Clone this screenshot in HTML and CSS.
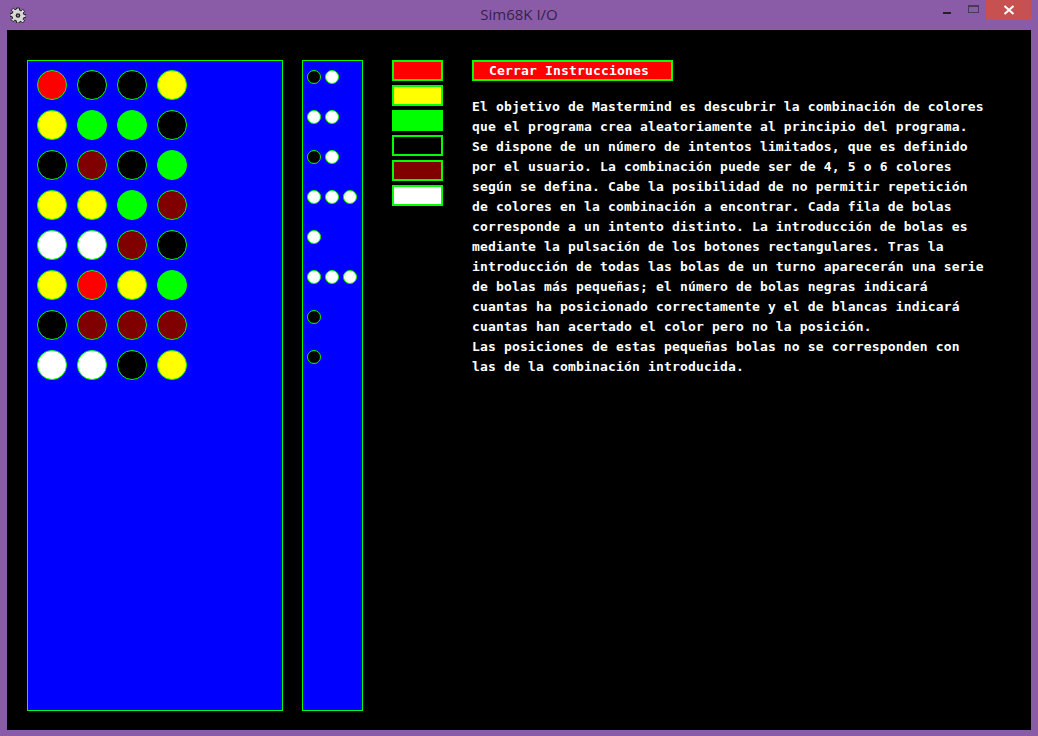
FILE: index.html
```html
<!DOCTYPE html>
<html>
<head>
<meta charset="utf-8">
<link rel="stylesheet" href="styles.css">
</head>
<body>
<div class="window">
  <div class="titlebar">
    <svg class="appicon" width="16" height="16" viewBox="0 0 16 16">
      <path d="M6.5 1h3v2.2l1.6.7 1.6-1.6 2.1 2.1-1.6 1.6.7 1.6H16v3h-2.2l-.7 1.6 1.6 1.6-2.1 2.1-1.6-1.6-1.6.7V16h-3v-2.2l-1.6-.7-1.6 1.6-2.1-2.1 1.6-1.6-.7-1.6H0v-3h2.2l.7-1.6-1.6-1.6 2.1-2.1 1.6 1.6 1.6-.7z" fill="#d8d8d8" stroke="#222" stroke-width="1"/>
      <circle cx="8" cy="8.5" r="2.3" fill="#222"/>
      <circle cx="8" cy="8.5" r="1" fill="#999"/>
    </svg>
    <div class="title">Sim68K I/O</div>
    <div class="controls">
      <div class="ctl min"><span class="dash"></span></div>
      <div class="ctl max"><span class="box"></span></div>
      <div class="ctl close">
        <svg width="12" height="10" viewBox="0 0 12 10"><path d="M1.5 1l9 8M10.5 1l-9 8" stroke="#fff" stroke-width="2"/></svg>
      </div>
    </div>
  </div>
  <div class="canvas">
    <div class="board">
      <div class="ball red"></div><div class="ball black"></div><div class="ball black"></div><div class="ball yellow"></div>
      <div class="ball yellow"></div><div class="ball green"></div><div class="ball green"></div><div class="ball black"></div>
      <div class="ball black"></div><div class="ball maroon"></div><div class="ball black"></div><div class="ball green"></div>
      <div class="ball yellow"></div><div class="ball yellow"></div><div class="ball green"></div><div class="ball maroon"></div>
      <div class="ball white"></div><div class="ball white"></div><div class="ball maroon"></div><div class="ball black"></div>
      <div class="ball yellow"></div><div class="ball red"></div><div class="ball yellow"></div><div class="ball green"></div>
      <div class="ball black"></div><div class="ball maroon"></div><div class="ball maroon"></div><div class="ball maroon"></div>
      <div class="ball white"></div><div class="ball white"></div><div class="ball black"></div><div class="ball yellow"></div>
    </div>
    <div class="pegs">
      <div class="pegrow"><div class="peg black"></div><div class="peg white"></div></div>
      <div class="pegrow"><div class="peg white"></div><div class="peg white"></div></div>
      <div class="pegrow"><div class="peg black"></div><div class="peg white"></div></div>
      <div class="pegrow"><div class="peg white"></div><div class="peg white"></div><div class="peg white"></div></div>
      <div class="pegrow"><div class="peg white"></div></div>
      <div class="pegrow"><div class="peg white"></div><div class="peg white"></div><div class="peg white"></div></div>
      <div class="pegrow"><div class="peg black"></div></div>
      <div class="pegrow"><div class="peg black"></div></div>
    </div>
    <div class="swatches">
      <div class="swatch red"></div>
      <div class="swatch yellow"></div>
      <div class="swatch green"></div>
      <div class="swatch black"></div>
      <div class="swatch maroon"></div>
      <div class="swatch white"></div>
    </div>
    <div class="instructions">
      <div class="closebtn">Cerrar Instrucciones</div>
      <div class="text">
        <div class="line">El objetivo de Mastermind es descubrir la combinación de colores</div>
        <div class="line">que el programa crea aleatoriamente al principio del programa.</div>
        <div class="line">Se dispone de un número de intentos limitados, que es definido</div>
        <div class="line">por el usuario. La combinación puede ser de 4, 5 o 6 colores</div>
        <div class="line">según se defina. Cabe la posibilidad de no permitir repetición</div>
        <div class="line">de colores en la combinación a encontrar. Cada fila de bolas</div>
        <div class="line">corresponde a un intento distinto. La introducción de bolas es</div>
        <div class="line">mediante la pulsación de los botones rectangulares. Tras la</div>
        <div class="line">introducción de todas las bolas de un turno aparecerán una serie</div>
        <div class="line">de bolas más pequeñas; el número de bolas negras indicará</div>
        <div class="line">cuantas ha posicionado correctamente y el de blancas indicará</div>
        <div class="line">cuantas han acertado el color pero no la posición.</div>
        <div class="line">Las posiciones de estas pequeñas bolas no se corresponden con</div>
        <div class="line">las de la combinación introducida.</div>
      </div>
    </div>
  </div>
</div>
</body>
</html>
```

FILE: styles.css
```css
* { box-sizing: border-box; }
html, body { margin: 0; padding: 0; }
body {
  width: 1038px;
  height: 736px;
  background: #8a5ca8;
  overflow: hidden;
  font-family: "Open Sans", "Noto Sans", sans-serif;
}
.window {
  width: 1038px;
  height: 736px;
  display: flex;
  flex-direction: column;
}
.titlebar {
  height: 30px;
  display: flex;
  align-items: flex-start;
  position: relative;
}
.appicon {
  margin: 7px 0 0 10px;
}
.title {
  position: absolute;
  left: 0;
  right: 0;
  top: 4px;
  text-align: center;
  font-size: 15px;
  color: #33224a;
  line-height: 20px;
}
.controls {
  margin-left: auto;
  margin-right: 7px;
  display: flex;
  align-items: flex-start;
  position: relative;
}
.ctl {
  height: 20px;
  display: flex;
  align-items: center;
  justify-content: center;
}
.min { width: 26px; }
.min .dash { width: 8px; height: 2px; background: #222; margin-top: 5px; }
.max { width: 26px; }
.max .box { width: 11px; height: 8px; border: 1px solid #4a3a5a; border-top-width: 2px; margin-top: -2px; }
.close {
  width: 45px;
  background: #c75050;
}
.canvas {
  margin: 0 7px;
  height: 700px;
  background: #000;
  display: flex;
  align-items: flex-start;
  padding: 30px 0 0 20px;
}
.board {
  width: 256px;
  height: 651px;
  background: #0000ff;
  border: 1px solid #00ff00;
  padding: 9px;
  display: grid;
  grid-template-columns: repeat(4, 30px);
  grid-auto-rows: 30px;
  gap: 10px;
  align-content: start;
}
.ball {
  width: 30px;
  height: 30px;
  border-radius: 50%;
  border: 1px solid #00ff00;
}
.red { background: #ff0000; }
.black { background: #000000; }
.yellow { background: #ffff00; }
.green { background: #00ff00; }
.maroon { background: #800000; }
.white { background: #ffffff; }
.pegs {
  margin-left: 19px;
  width: 61px;
  height: 651px;
  background: #0000ff;
  border: 1px solid #00ff00;
  padding: 9px 0 0 4px;
  display: flex;
  flex-direction: column;
  gap: 26px;
}
.pegrow {
  display: flex;
  gap: 4px;
  height: 14px;
}
.peg {
  width: 14px;
  height: 14px;
  border-radius: 50%;
  border: 1px solid #00ff00;
}
.swatches {
  margin-left: 29px;
  display: flex;
  flex-direction: column;
  gap: 4px;
}
.swatch {
  width: 51px;
  height: 21px;
  border: 2px solid #00ff00;
}
.instructions {
  margin-left: 29px;
  display: flex;
  flex-direction: column;
  align-items: flex-start;
}
.closebtn {
  width: 201px;
  height: 21px;
  background: #ff0000;
  border: 2px solid #00ff00;
  color: #fff;
  font-family: "DejaVu Sans Mono", "Liberation Mono", monospace;
  font-weight: bold;
  font-size: 13px;
  letter-spacing: 0.17px;
  line-height: 17px;
  padding-left: 15px;
  white-space: pre;
}
.text {
  margin-top: 16px;
  color: #fff;
  font-family: "DejaVu Sans Mono", "Liberation Mono", monospace;
  font-weight: bold;
  font-size: 13px;
  letter-spacing: 0.17px;
  line-height: 20px;
}
.line { white-space: pre; height: 20px; }
```
